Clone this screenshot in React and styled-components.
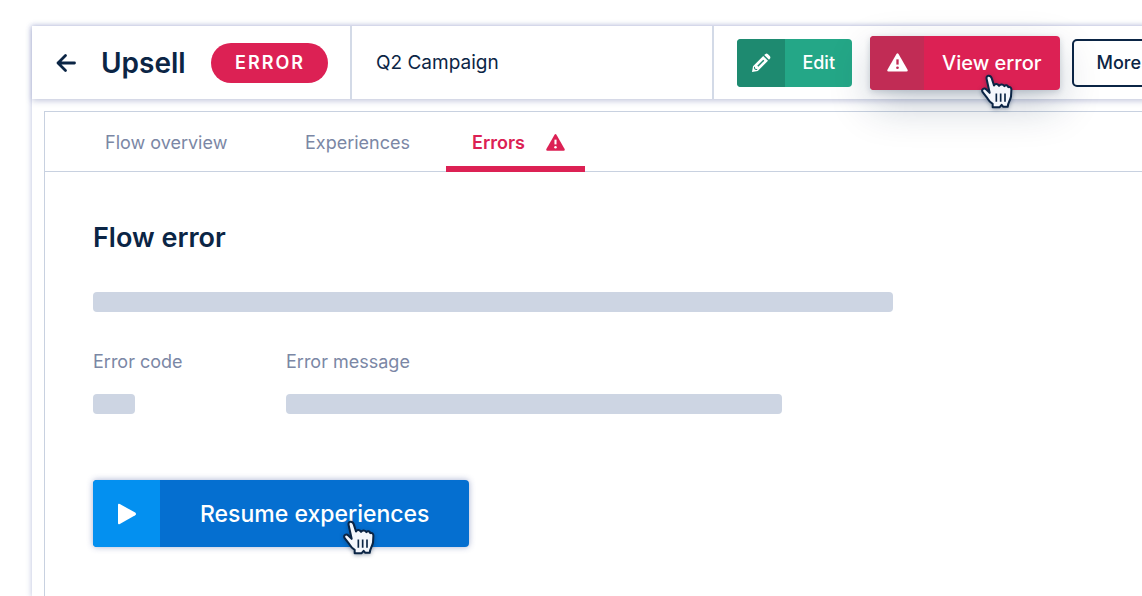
import React from "react";
import styled, { createGlobalStyle } from "styled-components";

const GlobalStyle = createGlobalStyle`
  *, *::before, *::after { box-sizing: border-box; }
  body {
    margin: 0;
    background: #ffffff;
    color: #0b2545;
    font-family: Inter, "Liberation Sans", sans-serif;
  }
  button { font-family: inherit; cursor: pointer; }
`;

const Page = styled.div`
  display: flex;
  min-height: 100vh;
  padding: 26px 0 0 32px;
  overflow: hidden;
`;

/* The window runs on past the right edge of the page. */
const Window = styled.div`
  flex: 1;
  display: flex;
  flex-direction: column;
  margin-right: -56px;
  background: #ffffff;
  box-shadow: 0 0 5px 1px rgba(70, 85, 165, 0.28);
`;

const Header = styled.header`
  position: relative;
  z-index: 1;
  display: flex;
  height: 73px;
  box-shadow: 0 2px 6px rgba(70, 85, 150, 0.32);
`;

const TitleArea = styled.div`
  display: flex;
  align-items: center;
  width: 320px;
  padding-left: 24px;
  border-right: 2px solid #d3dae7;
`;

const BackLink = styled.a`
  display: flex;
  margin-right: 25px;
  color: inherit;
`;

const Title = styled.h1`
  flex: 1;
  margin: 0;
  font-size: 28px;
  line-height: 32px;
  font-weight: 600;
`;

const Badge = styled.span`
  margin-right: 22px;
  padding: 0 23px 0 24px;
  border-radius: 20px;
  background: #dc2154;
  color: #ffffff;
  font-size: 18px;
  line-height: 40px;
  font-weight: 600;
  letter-spacing: 2px;
`;

const Campaign = styled.div`
  flex: 1;
  display: flex;
  align-items: center;
  padding-left: 24px;
  border-right: 2px solid #d3dae7;
  font-size: 19px;
`;

const Actions = styled.div`
  display: flex;
  align-items: center;
  padding: 0 32px 0 23px;
`;

const tones = {
  green: { main: "#24a787", icon: "#1e8a70" },
  red: { main: "#dc2154", icon: "#c12c55" },
  blue: { main: "#056fd0", icon: "#0390f0" },
};

const sizes = {
  small: { height: 48, icon: 48, pad: 17, font: 18 },
  medium: { height: 54, icon: 54, pad: 18, font: 20 },
  large: { height: 67, icon: 67, pad: 40, font: 23 },
};

const SplitButton = styled.button`
  position: relative;
  display: flex;
  align-items: center;
  height: ${(p) => sizes[p.$size].height}px;
  margin: 0;
  padding: 0;
  border: 0;
  border-radius: 4px;
  background: ${(p) => tones[p.$tone].main};
  color: #ffffff;
  font-size: ${(p) => sizes[p.$size].font}px;
  font-weight: 500;
  white-space: nowrap;
  box-shadow: ${(p) => p.$shadow || "none"};
`;

const ButtonIcon = styled.span`
  display: flex;
  align-items: center;
  justify-content: center;
  width: ${(p) => sizes[p.$size].icon}px;
  height: 100%;
  border-radius: 4px 0 0 4px;
  background: ${(p) => tones[p.$tone].icon};
`;

const ButtonText = styled.span`
  padding: 0 ${(p) => sizes[p.$size].pad}px;
`;

const EditSlot = styled.div`
  margin-right: 18px;
`;

const MoreButton = styled.button`
  height: 48px;
  margin-left: 12px;
  padding: 0 23px;
  border: 2px solid #0b2545;
  border-radius: 5px;
  background: transparent;
  color: #0b2545;
  font-size: 18px;
  font-weight: 500;
`;

const Pointer = styled.svg`
  position: absolute;
  right: ${(p) => p.$right}px;
  bottom: ${(p) => p.$bottom}px;
  width: 32px;
  height: 35px;
  filter: drop-shadow(0 1px 2px rgba(11, 37, 69, 0.4));
`;

const Panel = styled.main`
  flex: 1;
  margin: 12px 0 0 12px;
  border: solid #c8d1e0;
  border-width: 1px 0 0 1px;
`;

const Tabs = styled.nav`
  display: flex;
  gap: 16px;
  height: 60px;
  padding-left: 34px;
  border-bottom: 1px solid #c8d1e0;
`;

const Tab = styled.a`
  display: flex;
  align-items: center;
  gap: 21px;
  height: 60px;
  min-width: ${(p) => p.$minWidth || 0}px;
  padding: 0 20px 0 26px;
  color: ${(p) => (p.$active ? "#dc2154" : "#7b87a5")};
  font-size: 18px;
  font-weight: ${(p) => (p.$active ? 600 : 400)};
  text-decoration: none;
  box-shadow: ${(p) => (p.$active ? "inset 0 -6px #dc2154" : "none")};
`;

const Body = styled.section`
  padding: 48px;
`;

const Heading = styled.h2`
  margin: 0 0 36px;
  font-size: 27px;
  line-height: 36px;
  font-weight: 600;
`;

const Bar = styled.div`
  max-width: ${(p) => p.$width}px;
  height: 20px;
  border-radius: 4px;
  background: #cdd5e3;
`;

const Details = styled.dl`
  display: grid;
  grid-template-columns: 193px 1fr;
  margin: 38px 0 66px;
`;

const Term = styled.dt`
  margin-bottom: 20px;
  color: #7b87a5;
  font-size: 18px;
  line-height: 24px;
`;

const Value = styled.dd`
  margin: 0;
`;

const WarningIcon = ({ size, hole }) => (
  <svg width={size} height={size} viewBox="0 0 20 20" aria-hidden="true">
    <path
      d="M9 1.8Q10 .4 11 1.8L19.6 16.8Q20.2 18.5 18.6 18.6H1.4Q-.2 18.5.4 16.8Z"
      fill="currentColor"
    />
    <path d="M10 7v5" stroke={hole} strokeWidth="2.2" />
    <circle cx="10" cy="15" r="1.3" fill={hole} />
  </svg>
);

const PencilIcon = () => (
  <svg width="20" height="20" viewBox="0 0 20 20" aria-hidden="true">
    <path
      d="M1 19 2 13.2 12.2 3 17 7.8 6.8 18Z M13.2 2 14.5.9Q15.8.2 17 1.2L18.8 3Q19.8 4.2 19.1 5.5L18 6.8Z"
      fill="currentColor"
    />
    <path d="M6.8 13.2 12.8 7.2" stroke="#1e8a70" strokeWidth="1.5" />
    <path d="M3.4 13.8 3.8 16.2 6.2 16.6" fill="none" stroke="#1e8a70" strokeWidth="1" />
  </svg>
);

const HandPointer = ({ right, bottom }) => (
  <Pointer $right={right} $bottom={bottom} viewBox="0 0 96 104" aria-hidden="true">
    <path
      d="M17 15C14 3 28 1 32 12L39 34C42 27 51 28 54 35C58 29 67 30 70 36C74 31 80 33 82 39C88 37 92 41 91 49L90 67C88 79 81 84 80 98H67L62 92L56 99H35V89C28 84 23 79 19 72L5 54C0 46 9 39 16 46L26 56Z"
      fill="#f4f7fc"
      stroke="#0b2545"
      strokeWidth="6"
      strokeLinejoin="round"
    />
    <path d="M46 58V83M59 58V83M72 58V83" stroke="#0b2545" strokeWidth="5" />
  </Pointer>
);

export default function App() {
  return (
    <>
      <GlobalStyle />
      <Page>
        <Window>
          <Header>
            <TitleArea>
              <BackLink href="#flows" aria-label="Back">
                <svg width="20" height="20" viewBox="0 0 20 20" aria-hidden="true">
                  <path
                    d="M18.5 10H2M9.5 2.5 2 10 9.5 17.5"
                    fill="none"
                    stroke="currentColor"
                    strokeWidth="2.8"
                    strokeLinecap="round"
                    strokeLinejoin="round"
                  />
                </svg>
              </BackLink>
              <Title>Upsell</Title>
              <Badge>ERROR</Badge>
            </TitleArea>
            <Campaign>Q2 Campaign</Campaign>
            <Actions>
              <EditSlot>
                <SplitButton type="button" $tone="green" $size="small">
                  <ButtonIcon $tone="green" $size="small">
                    <PencilIcon />
                  </ButtonIcon>
                  <ButtonText $size="small">Edit</ButtonText>
                </SplitButton>
              </EditSlot>
              <SplitButton
                type="button"
                $tone="red"
                $size="medium"
                $shadow="0 2px 6px rgba(11, 37, 69, 0.18), 0 16px 44px -2px rgba(11, 37, 69, 0.24)"
              >
                <ButtonIcon $tone="red" $size="medium">
                  <WarningIcon size={21} hole="#c12c55" />
                </ButtonIcon>
                <ButtonText $size="medium">View error</ButtonText>
                <HandPointer right={47} bottom={-19} />
              </SplitButton>
              <MoreButton type="button">More</MoreButton>
            </Actions>
          </Header>
          <Panel>
            <Tabs>
              <Tab href="#overview" $minWidth={184}>
                Flow overview
              </Tab>
              <Tab href="#experiences">Experiences</Tab>
              <Tab href="#errors" $active aria-current="page">
                Errors
                <WarningIcon size={19} hole="#ffffff" />
              </Tab>
            </Tabs>
            <Body>
              <Heading>Flow error</Heading>
              <Bar $width={800} />
              <Details>
                <Term>Error code</Term>
                <Term>Error message</Term>
                <Value>
                  <Bar $width={42} />
                </Value>
                <Value>
                  <Bar $width={496} />
                </Value>
              </Details>
              <SplitButton
                type="button"
                $tone="blue"
                $size="large"
                $shadow="0 0 6px rgba(60, 80, 150, 0.45)"
              >
                <ButtonIcon $tone="blue" $size="large">
                  <svg width="20" height="22" viewBox="0 0 20 22" aria-hidden="true">
                    <path
                      d="M1 2Q1 .2 2.8 1L18.2 9.6Q19.8 11 18.2 12.2L2.8 21Q1 21.8 1 20Z"
                      fill="currentColor"
                    />
                  </svg>
                </ButtonIcon>
                <ButtonText $size="large">Resume experiences</ButtonText>
                <HandPointer right={94} bottom={-8} />
              </SplitButton>
            </Body>
          </Panel>
        </Window>
      </Page>
    </>
  );
}
